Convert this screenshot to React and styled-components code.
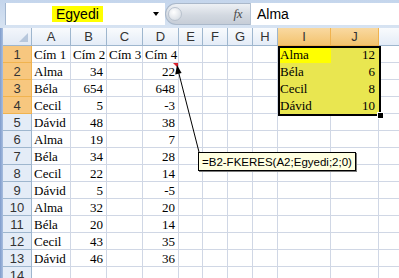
import React from 'react';
import styled, { createGlobalStyle } from 'styled-components';

const GlobalStyle = createGlobalStyle`
  html, body { margin: 0; padding: 0; background: #fff; overflow: hidden; }
  #root { width: 399px; height: 278px; }
`;

const Window = styled.div`
  width: 399px;
  height: 278px;
  overflow: hidden;
  display: flex;
  flex-direction: column;
  background: #fff;
`;

const FormulaBar = styled.div`
  height: 28px;
  flex: none;
  display: flex;
  box-sizing: border-box;
  padding: 3px 0 3px 5px;
  background: linear-gradient(#c4d5ec, #d7e3f2);
`;

const NameBox = styled.div`
  width: 160px;
  flex: none;
  display: flex;
  align-items: center;
  box-sizing: border-box;
  padding-left: 46px;
  padding-right: 6px;
  background: #fff;
  border-left: 1px solid #a3b7d0;
`;

const NameHighlight = styled.span`
  background: #ffff00;
  color: #000;
  font: 14px "Liberation Sans", Arial, sans-serif;
  line-height: 14px;
  padding: 1px 4px;
`;

const DropArrow = styled.span`
  margin-left: auto;
  width: 0;
  height: 0;
  border-left: 3px solid transparent;
  border-right: 3px solid transparent;
  border-top: 4px solid #000;
`;

const Pill = styled.div`
  width: 85px;
  flex: none;
  display: flex;
  align-items: center;
  justify-content: space-between;
  box-sizing: border-box;
  padding: 0 8px 0 2px;
  border: 1px solid #aab8ca;
  border-right: none;
  border-radius: 11px 0 0 11px;
  background: linear-gradient(#eef1f5, #d3d9e1 55%, #c6cdd7);
`;

const KnobButton = styled.span`
  width: 14px;
  height: 14px;
  border-radius: 50%;
  box-sizing: border-box;
  border: 1px solid #b9c2ce;
  background: radial-gradient(circle at 40% 35%, #ffffff, #dde2e8 70%, #c5ccd6);
`;

const FxLabel = styled.span`
  font: italic 13px "Liberation Serif", "Times New Roman", serif;
  color: #4b4b4b;
  letter-spacing: -0.5px;
`;

const FormulaInput = styled.div`
  flex: 1;
  display: flex;
  align-items: center;
  padding-left: 6px;
  background: #fff;
  border-left: 1px solid #b5c3d4;
  font: 14px "Liberation Sans", Arial, sans-serif;
  color: #000;
`;

const SheetRow = styled.div`
  flex: 1;
  display: flex;
  min-height: 0;
`;

const LeftFrame = styled.div`
  width: 3px;
  flex: none;
  background: linear-gradient(90deg, #7f9ccc, #a9bfdf);
`;

const SheetArea = styled.div`
  position: relative;
  flex: 1;
`;

const Grid = styled.div`
  display: grid;
  grid-template-columns: 29px 39px 36px 36px 36px 24px 25px 25px 25px 53px 48px 40px;
  grid-template-rows: 18px repeat(14, 17px);
`;

const Corner = styled.div`
  position: relative;
  box-sizing: border-box;
  border-right: 1px solid #9eb6ce;
  border-bottom: 1px solid #9eb6ce;
  background: linear-gradient(#f3f6fb, #e1e9f4);
  &::after {
    content: '';
    position: absolute;
    right: 3px;
    bottom: 3px;
    width: 0;
    height: 0;
    border-left: 9px solid transparent;
    border-bottom: 9px solid #b7c7dc;
  }
`;

const ColHeader = styled.div`
  box-sizing: border-box;
  display: flex;
  align-items: center;
  justify-content: center;
  border-right: 1px solid ${p => (p.$sel ? '#f0b34f' : '#9eb6ce')};
  border-bottom: 1px solid ${p => (p.$sel ? '#f0b34f' : '#9eb6ce')};
  background: ${p => (p.$sel ? 'linear-gradient(#f9d9a1, #f3c36e)' : 'linear-gradient(#f9fbfd, #e4ecf7)')};
  font: 13px "Liberation Sans", Arial, sans-serif;
  color: #333;
`;

const RowHeader = styled.div`
  box-sizing: border-box;
  display: flex;
  align-items: center;
  justify-content: center;
  border-right: 1px solid ${p => (p.$sel ? '#f0b34f' : '#9eb6ce')};
  border-bottom: 1px solid ${p => (p.$sel ? '#f0b34f' : '#9eb6ce')};
  background: ${p => (p.$sel ? '#f7c77f' : '#e4ecf7')};
  font: 13px "Liberation Sans", Arial, sans-serif;
  color: #333;
`;

const Cell = styled.div`
  position: relative;
  box-sizing: border-box;
  display: flex;
  align-items: flex-end;
  justify-content: ${p => (p.$num ? 'flex-end' : 'flex-start')};
  padding: 0 3px 0 2px;
  border-right: 1px solid ${p => p.$fill || '#d0d7e5'};
  border-bottom: 1px solid ${p => p.$fill || '#d0d7e5'};
  background: ${p => p.$fill || '#fff'};
  font: 13px "Liberation Serif", "Times New Roman", serif;
  line-height: 15px;
  color: #000;
  white-space: nowrap;
  &::after {
    content: '';
    display: ${p => (p.$comment ? 'block' : 'none')};
    position: absolute;
    top: 0;
    right: 0;
    width: 0;
    height: 0;
    border-left: 5px solid transparent;
    border-top: 5px solid #d9232e;
  }
`;

const Selection = styled.div`
  position: absolute;
  left: 275px;
  top: 18px;
  width: 103px;
  height: 70px;
  box-sizing: border-box;
  border: 2px solid #000;
  pointer-events: none;
`;

const FillHandle = styled.span`
  position: absolute;
  right: -5px;
  bottom: -5px;
  width: 5px;
  height: 5px;
  background: #000;
  border: 1px solid #fff;
`;

const Callout = styled.svg`
  position: absolute;
  left: 0;
  top: 0;
  width: 396px;
  height: 250px;
  pointer-events: none;
`;

const CommentBox = styled.div`
  position: absolute;
  left: 195px;
  top: 124px;
  height: 19px;
  box-sizing: border-box;
  padding: 0 3px;
  display: flex;
  align-items: center;
  background: #ffffe1;
  border: 1px solid #000;
  box-shadow: 1px 1px 0 #7a7a7a;
  font: 11.5px "Liberation Sans", Arial, sans-serif;
  color: #000;
  white-space: nowrap;
`;

const COLS = ['A', 'B', 'C', 'D', 'E', 'F', 'G', 'H', 'I', 'J', ''];

const LEFT = [
  ['Cím 1', 'Cím 2', 'Cím 3', 'Cím 4'],
  ['Alma', 34, '', 22],
  ['Béla', 654, '', 648],
  ['Cecil', 5, '', -3],
  ['Dávid', 48, '', 38],
  ['Alma', 19, '', 7],
  ['Béla', 34, '', 28],
  ['Cecil', 22, '', 14],
  ['Dávid', 5, '', -5],
  ['Alma', 32, '', 20],
  ['Béla', 20, '', 14],
  ['Cecil', 43, '', 35],
  ['Dávid', 46, '', 36],
  ['', '', '', ''],
];

const LOOKUP = [
  ['Alma', 12],
  ['Béla', 6],
  ['Cecil', 8],
  ['Dávid', 10],
];

const YELLOW = '#ffff00';
const SEL_YELLOW = '#e9e650';

export default function App() {
  const rows = [];
  LEFT.forEach((vals, r) => {
    const rowSel = r < 4;
    const cells = [];
    cells.push(
      <RowHeader key="h" $sel={rowSel}>
        {r + 1}
      </RowHeader>
    );
    vals.forEach((v, c) => {
      cells.push(
        <Cell key={`l${c}`} $num={typeof v === 'number'} $comment={r === 1 && c === 3}>
          {v}
        </Cell>
      );
    });
    for (let c = 4; c < 8; c++) cells.push(<Cell key={`e${c}`} />);
    if (r < 4) {
      const [name, val] = LOOKUP[r];
      cells.push(
        <Cell key="i" $fill={r === 0 ? YELLOW : SEL_YELLOW}>
          {name}
        </Cell>
      );
      cells.push(
        <Cell key="j" $num $fill={SEL_YELLOW}>
          {val}
        </Cell>
      );
    } else {
      cells.push(<Cell key="i" />);
      cells.push(<Cell key="j" />);
    }
    cells.push(<Cell key="k" />);
    rows.push(<React.Fragment key={r}>{cells}</React.Fragment>);
  });

  return (
    <>
      <GlobalStyle />
      <Window>
        <FormulaBar>
          <NameBox>
            <NameHighlight>Egyedi</NameHighlight>
            <DropArrow />
          </NameBox>
          <Pill>
            <KnobButton />
            <FxLabel>fx</FxLabel>
          </Pill>
          <FormulaInput>Alma</FormulaInput>
        </FormulaBar>
        <SheetRow>
          <LeftFrame />
          <SheetArea>
            <Grid>
              <Corner />
              {COLS.map((c, i) => (
                <ColHeader key={i} $sel={c === 'I' || c === 'J'}>
                  {c}
                </ColHeader>
              ))}
              {rows}
            </Grid>
            <Selection>
              <FillHandle />
            </Selection>
            <Callout viewBox="0 0 396 250">
              <line x1="175" y1="42" x2="196" y2="124" stroke="#000" strokeWidth="1" />
              <polygon points="174,37 178.6,45.1 172.2,46.6" fill="#000" />
            </Callout>
            <CommentBox>=B2-FKERES(A2;Egyedi;2;0)</CommentBox>
          </SheetArea>
        </SheetRow>
      </Window>
    </>
  );
}
